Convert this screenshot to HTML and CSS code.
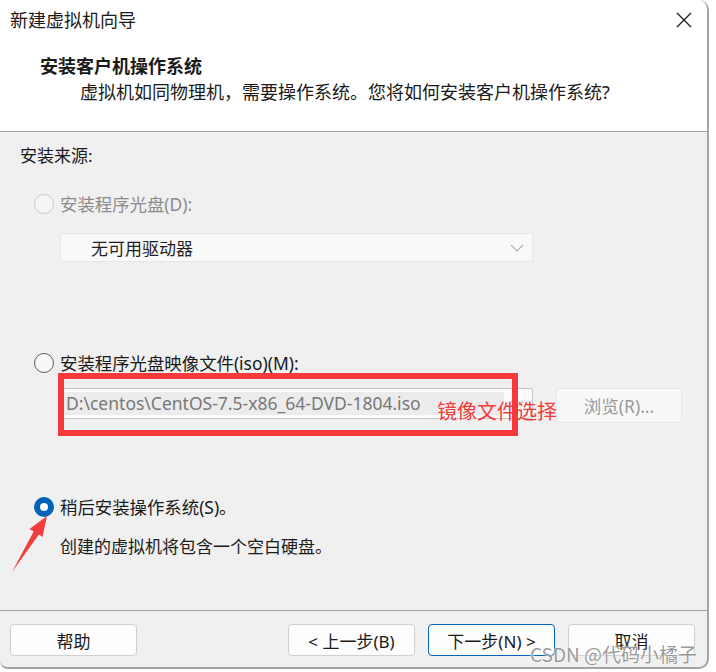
FILE: index.html
```html
<!DOCTYPE html>
<html lang="zh-CN">
<head>
<meta charset="utf-8">
<title>新建虚拟机向导</title>
<link rel="stylesheet" href="styles.css">
</head>
<body>
<div class="window">
  <div class="header">
    <div class="titlebar">
      <span class="title">新建虚拟机向导</span>
      <svg class="close" width="16" height="16" viewBox="0 0 16 16"><path d="M1 1 L15 15 M15 1 L1 15" stroke="#1a1a1a" stroke-width="1.3" fill="none"/></svg>
    </div>
    <div class="heading">安装客户机操作系统</div>
    <div class="subtitle">虚拟机如同物理机，需要操作系统。您将如何安装客户机操作系统?</div>
  </div>
  <div class="content">
    <div class="label">安装来源:</div>
    <div class="row disabled row1"><span class="radio off dim"></span><span>安装程序光盘(D):</span></div>
    <div class="combo">
      <span class="combo-text">无可用驱动器</span>
      <svg class="chev" width="14" height="8" viewBox="0 0 14 8"><path d="M1 1 L7 7 L13 1" stroke="#b4b4b4" stroke-width="1.2" fill="none"/></svg>
    </div>
    <div class="row row2"><span class="radio off"></span><span>安装程序光盘映像文件(iso)(M):</span></div>
    <div class="iso-line">
      <div class="iso-box">
        <span class="iso-text">D:\centos\CentOS-7.5-x86_64-DVD-1804.iso</span>
        <svg class="chev2" width="14" height="8" viewBox="0 0 14 8"><path d="M1 1 L7 7 L13 1" stroke="#b4b4b4" stroke-width="1.2" fill="none"/></svg>
      </div>
      <div class="browse">浏览(R)...</div>
      <div class="redbox"></div>
      <div class="note">镜像文件选择</div>
    </div>
    <div class="row row3"><span class="radio on"></span><span>稍后安装操作系统(S)。</span></div>
    <div class="desc">创建的虚拟机将包含一个空白硬盘。</div>
    <svg class="arrow" width="60" height="70" viewBox="0 0 60 70"><polygon points="47,2 42.5,23 38.9,20.6 12,58 33.7,17.6 29.5,15" fill="#f23d3d"/></svg>
  </div>
  <div class="footer">
    <div class="btn help">帮助</div>
    <div class="btn-group">
      <div class="btn">&lt; 上一步(B)</div>
      <div class="btn primary">下一步(N) &gt;</div>
      <div class="btn">取消</div>
    </div>
  </div>
</div>
<div class="watermark">CSDN @代码小橘子</div>
</body>
</html>
```
FILE: styles.css
```css
html, body {
  margin: 0;
  padding: 0;
  background: #ffffff;
  font-family: "Noto Sans", "Noto Sans CJK SC", sans-serif;
  color: #1a1a1a;
}

.window {
  position: relative;
  width: 707px;
  height: 667px;
  border-right: 2px solid #a4a4a4;
  border-bottom: 2px solid #a4a4a4;
  border-radius: 0 10px 10px 8px;
  overflow: hidden;
  display: flex;
  flex-direction: column;
  background: #f0f0f0;
}

.header {
  height: 131px;
  background: #ffffff;
  border-bottom: 1px solid #a0a0a0;
  flex: none;
}

.titlebar {
  height: 40px;
  display: flex;
  align-items: center;
  justify-content: space-between;
  padding: 0 15px 0 10px;
}

.title {
  font-size: 18px;
  line-height: 24px;
}

.close {
  display: block;
}

.heading {
  margin-top: 13px;
  padding-left: 40px;
  font-size: 18px;
  font-weight: 700;
  line-height: 26px;
}

.subtitle {
  padding-left: 80px;
  font-size: 18px;
  line-height: 26px;
}

.content {
  position: relative;
  height: 478px;
  border-bottom: 1px solid #a0a0a0;
  flex: none;
  font-size: 17px;
}

.label {
  margin-top: 12px;
  padding-left: 20px;
  line-height: 24px;
}

.row {
  display: flex;
  align-items: center;
  height: 24px;
  line-height: 24px;
  padding-left: 34px;
  gap: 6px;
  font-size: 17.4px;
}

.row1 { margin-top: 24px; }
.row2 { margin-top: 89px; }
.row3 { margin-top: 72px; }

.disabled { color: #8c8c8c; }

.radio {
  width: 20px;
  height: 20px;
  box-sizing: border-box;
  border-radius: 50%;
  flex: none;
}

.radio.off {
  border: 1px solid #5c5c5c;
  background: #f7f7f7;
}

.radio.off.dim {
  border-color: #c9c9c9;
  background: #f5f5f5;
}

.radio.on {
  border: 6px solid #0062b8;
  background: #ffffff;
}

.combo {
  margin: 17px 0 0 60px;
  width: 473px;
  height: 29px;
  box-sizing: border-box;
  background: #f9f9f9;
  border: 1px solid #e6e6e6;
  border-radius: 2px;
  display: flex;
  align-items: center;
  justify-content: space-between;
  padding: 0 8px 0 30px;
  color: #1f1f1f;
}

.iso-line {
  position: relative;
  margin-top: 13px;
  padding-left: 60px;
  display: flex;
  align-items: flex-start;
  gap: 23px;
}

.iso-box {
  width: 473px;
  height: 31px;
  box-sizing: border-box;
  border: 1px solid #c6c6c6;
  border-radius: 2px;
  background: #fbfbfb;
  display: flex;
  align-items: center;
  justify-content: space-between;
  padding: 3px 8px 3px 2px;
}

.iso-text {
  flex: none;
  width: 441px;
  height: 23px;
  line-height: 23px;
  background: #ececec;
  color: #787878;
  padding-left: 3px;
  box-sizing: border-box;
  white-space: nowrap;
  overflow: hidden;
  font-size: 17.5px;
}

.browse {
  width: 126px;
  height: 35px;
  box-sizing: border-box;
  border: 1px solid #e6e6e6;
  border-radius: 4px;
  background: #f8f8f8;
  color: #9a9a9a;
  display: flex;
  align-items: center;
  justify-content: center;
  font-size: 17.5px;
}

.redbox {
  position: absolute;
  left: 58px;
  top: -15px;
  width: 460px;
  height: 63px;
  box-sizing: border-box;
  border: 6px solid #f43a3a;
}

.note {
  position: absolute;
  left: 437px;
  top: 9px;
  font-size: 20px;
  line-height: 28px;
  color: #f23c3c;
  font-family: "Noto Sans CJK SC", sans-serif;
}

.desc {
  margin-top: 16px;
  padding-left: 60px;
  line-height: 24px;
}

.arrow {
  position: absolute;
  left: 0;
  top: 382px;
}

.footer {
  flex: 1;
  display: flex;
  justify-content: space-between;
  padding: 13px 12px 0 10px;
  font-size: 17px;
}

.btn-group {
  display: flex;
  gap: 13px;
}

.btn {
  width: 127px;
  height: 32px;
  box-sizing: border-box;
  border: 1px solid #d0d0d0;
  border-radius: 4px;
  background: #fdfdfd;
  display: flex;
  align-items: center;
  justify-content: center;
  color: #1a1a1a;
}

.btn.primary {
  border: 1.5px solid #0067c0;
}

.watermark {
  position: absolute;
  left: 530px;
  top: 641px;
  font-size: 19px;
  line-height: 26px;
  color: rgba(120, 120, 120, 0.75);
  text-shadow: 0 0 2px #ffffff, 0 0 1px #ffffff;
  font-family: "Noto Sans CJK SC", sans-serif;
}
```
